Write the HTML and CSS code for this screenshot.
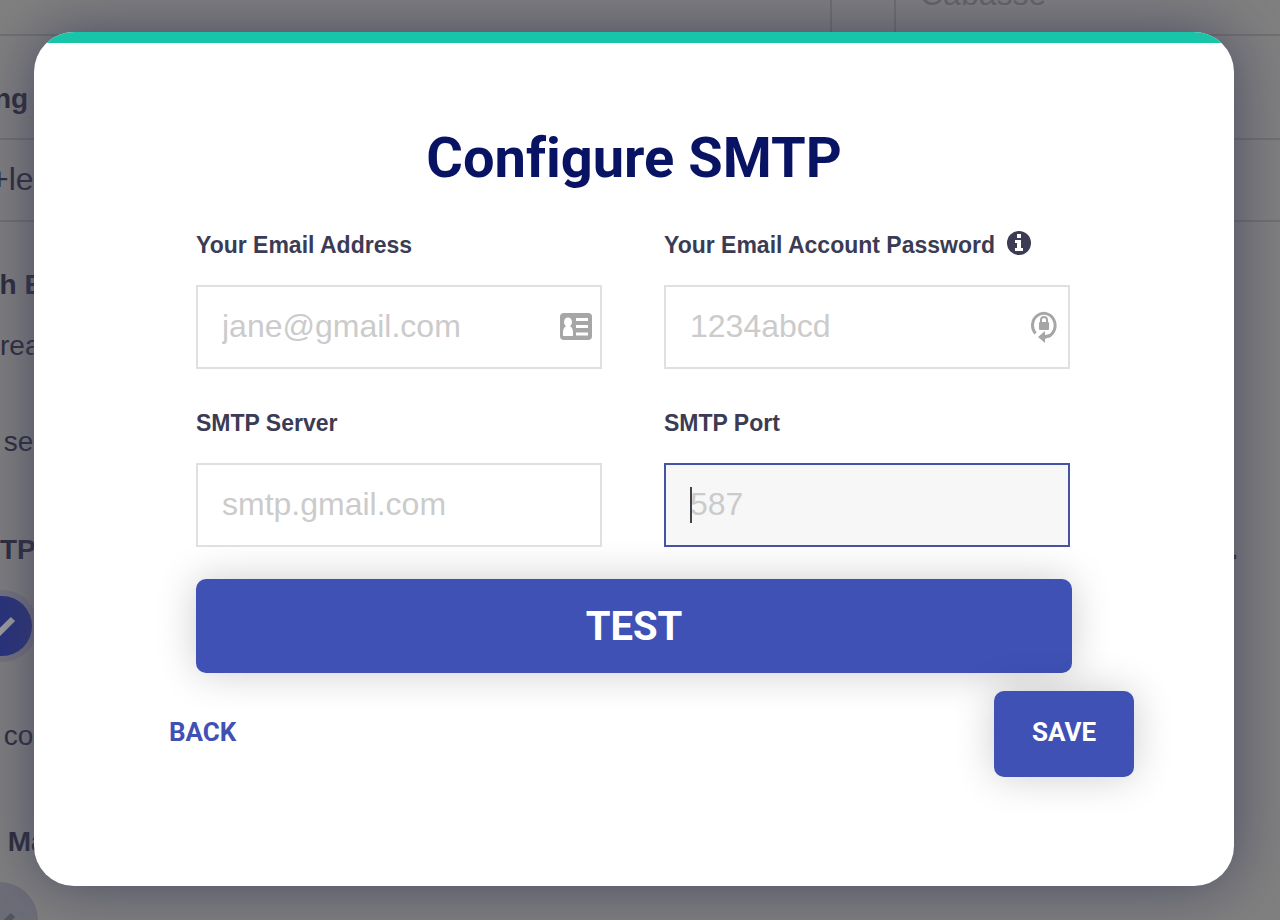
FILE: index.html
```html
<!DOCTYPE html>
<html lang="en">
<head>
    <meta charset="UTF-8">
    <meta name="viewport" content="width=device-width, initial-scale=1.0">
    <title>Configure SMTP</title>
    <link rel="stylesheet" href="styles.css">
</head>
<body>
    <div class="page">
        <div class="name-row">
            <div class="name-field"></div>
            <div class="name-field">Cabasse</div>
        </div>
        <div class="setting heading">ng</div>
        <div class="setting alias">+le</div>
        <div class="setting heading each">ch E</div>
        <div class="setting create">rea</div>
        <div class="setting set">&nbsp;se</div>
        <div class="setting heading smtp"><span>TP</span><span>.</span></div>
        <svg class="check" viewBox="0 0 76 76">
            <circle cx="38" cy="38" r="36" fill="#747480"/>
            <circle cx="38" cy="38" r="30" fill="#28327c"/>
            <path d="M28 40l6 6 15-15" fill="none" stroke="#a0a0a0" stroke-width="6" stroke-linejoin="round"/>
        </svg>
        <div class="setting connect">&nbsp;co</div>
        <div class="setting heading mailbox">&nbsp;Ma</div>
        <svg class="check" viewBox="0 0 76 76">
            <circle cx="36" cy="38" r="38" fill="#6d6e78"/>
            <path d="M28 42l6 6 15-15" fill="none" stroke="#54555f" stroke-width="6" stroke-linejoin="round"/>
        </svg>
    </div>

    <div class="overlay">
        <div class="modal" role="dialog" aria-labelledby="modalTitle">
            <h1 id="modalTitle">Configure SMTP</h1>
            <form id="smtpForm">
                <div class="fields">
                    <div class="field">
                        <label for="email">Your Email Address</label>
                        <div class="control">
                            <input type="email" id="email" placeholder="jane@gmail.com">
                            <svg class="icon" viewBox="0 0 32 32">
                                <rect x="0" y="2" width="32" height="27" rx="4" fill="#a6a6a6"/>
                                <ellipse cx="8" cy="11" rx="4" ry="4.500" fill="#fff"/>
                                <path d="M3 25v-3c0-4 1-6 3.500-7h3c2.500 1 3.500 3 3.500 7v3z" fill="#fff"/>
                                <path d="M16 8.500h12M16 15.500h12M16 23h12" stroke="#fff" stroke-width="3"/>
                            </svg>
                        </div>
                    </div>
                    <div class="field">
                        <label for="password">Your Email Account Password
                            <svg class="info" viewBox="0 0 24 24">
                                <circle cx="12" cy="12" r="12" fill="#3b3b54"/>
                                <path d="M10 3h4v4h-4zM8 9h6v8h2v3H8v-3h2v-5H8z" fill="#fff"/>
                            </svg>
                        </label>
                        <div class="control">
                            <input type="password" id="password" placeholder="1234abcd">
                            <svg class="icon" viewBox="0 0 32 32">
                                <path d="M7.500 22.500A11.300 12 0 1 1 20 25.500" fill="none" stroke="#a6a6a6" stroke-width="3"/>
                                <path d="M10 26l7-6v4l5-1v3l-5 2v4z" fill="#a6a6a6"/>
                                <rect x="11" y="11" width="10" height="8" rx="1" fill="#a6a6a6"/>
                                <path d="M13 12V9a3 3 0 0 1 6 0v3" fill="none" stroke="#a6a6a6" stroke-width="2"/>
                            </svg>
                        </div>
                    </div>
                    <div class="field">
                        <label for="server">SMTP Server</label>
                        <div class="control">
                            <input type="text" id="server" placeholder="smtp.gmail.com">
                        </div>
                    </div>
                    <div class="field">
                        <label for="port">SMTP Port</label>
                        <div class="control">
                            <input type="text" id="port" class="active" placeholder="587">
                            <span class="caret"></span>
                        </div>
                    </div>
                </div>
                <button type="button" class="btn test">TEST</button>
            </form>
            <div class="actions">
                <button type="button" class="back">BACK</button>
                <button type="submit" form="smtpForm" class="btn save">SAVE</button>
            </div>
        </div>
    </div>
</body>
</html>
```

FILE: styles.css
```css
* {
    box-sizing: border-box;
}
body {
    margin: 0;
    font-family: "Liberation Sans", Arial, sans-serif;
    background-color: #808080;
    height: 100vh;
    overflow: hidden;
}

/* settings page behind the modal, already dimmed and scrolled */
.page {
    margin-top: -48px;
    color: #2b2b3c;
    font-size: 28px;
    line-height: 32px;
}
.name-row {
    display: grid;
    grid-template-columns: 832px 1fr;
    column-gap: 62px;
    height: 84px;
}
.name-field {
    border: 2px solid #707070;
    border-left: none;
    padding-left: 24px;
    color: #646466;
    font-size: 32px;
    line-height: 80px;
}
.name-field + .name-field {
    border-left: 2px solid #707070;
    border-right: none;
}
.setting {
    white-space: nowrap;
}
.heading {
    font-weight: bold;
    padding-top: 47px;
    height: 102px;
    text-indent: -6px;
}
.alias {
    height: 84px;
    line-height: 78px;
    font-size: 32px;
    text-indent: -10px;
    border-top: 2px solid #707070;
    border-bottom: 2px solid #707070;
}
.each {
    height: 94px;
    text-indent: -16px;
}
.create {
    padding-top: 14px;
    height: 96px;
}
.set {
    padding-top: 14px;
    height: 62px;
    text-indent: -4px;
}
.smtp {
    display: flex;
    justify-content: space-between;
    padding: 60px 42px 0 0;
    height: 114px;
    text-indent: 0;
}
.check {
    display: block;
    width: 76px;
    height: 76px;
    margin-left: -36px;
}
.connect {
    padding-top: 56px;
    height: 130px;
    text-indent: -4px;
}
.mailbox {
    padding-top: 32px;
    height: 88px;
    text-indent: 0;
}

.overlay {
    position: absolute;
    inset: 0;
    padding: 32px 46px 0 34px;
}
.modal {
    background-color: #fff;
    border-radius: 40px;
    overflow: hidden;
    padding-bottom: 109px;
    box-shadow: 0 0 60px rgba(60, 60, 90, 0.8);
}
.modal::before {
    content: "";
    display: block;
    height: 11px;
    background-color: #18c5a9;
}
.modal h1 {
    margin: 81px 0 37px;
    font-family: Roboto, sans-serif;
    font-size: 56px;
    line-height: 68px;
    font-variant-ligatures: none;
    text-align: center;
    color: #081463;
}
.modal form {
    max-width: 876px;
    margin: 0 auto;
}
.fields {
    display: grid;
    grid-template-columns: 1fr 1fr;
    gap: 38px 62px;
    padding-right: 2px;
}
.field label {
    display: flex;
    align-items: center;
    gap: 12px;
    height: 32px;
    margin-bottom: 24px;
    font-size: 23px;
    font-weight: bold;
    color: #3b3b54;
}
.info {
    width: 24px;
    height: 24px;
    margin-bottom: 4px;
}
.control {
    position: relative;
}
.control input {
    display: block;
    width: 100%;
    height: 84px;
    padding: 0 24px 2px;
    border: 2px solid #e0e0e0;
    background-color: #fff;
    font-family: inherit;
    font-size: 32px;
    color: #3b3b54;
    outline: none;
}
.control input::placeholder {
    color: #cbcbcb;
}
.control input.active {
    border-color: #4553a5;
    background-color: #f7f7f7;
}
.icon {
    position: absolute;
    right: 10px;
    top: 26px;
    width: 32px;
    height: 32px;
}
.caret {
    position: absolute;
    left: 26px;
    top: 24px;
    width: 2px;
    height: 36px;
    background-color: #42424c;
}
.btn {
    border: none;
    border-radius: 10px;
    background-color: #3f51b5;
    color: #fff;
    font-family: Roboto, sans-serif;
    font-weight: bold;
    box-shadow: 0 0 40px rgba(0, 0, 0, 0.2);
    cursor: pointer;
}
.test {
    display: block;
    width: 100%;
    height: 94px;
    margin-top: 32px;
    font-size: 40px;
}
.actions {
    display: flex;
    justify-content: space-between;
    align-items: center;
    padding: 18px 100px 0 135px;
}
.back {
    border: none;
    padding: 0 0 4px;
    background: none;
    color: #3f51b5;
    font-family: Roboto, sans-serif;
    font-size: 26px;
    font-weight: bold;
    cursor: pointer;
}
.save {
    width: 140px;
    height: 86px;
    padding-bottom: 6px;
    font-size: 26px;
}
```
